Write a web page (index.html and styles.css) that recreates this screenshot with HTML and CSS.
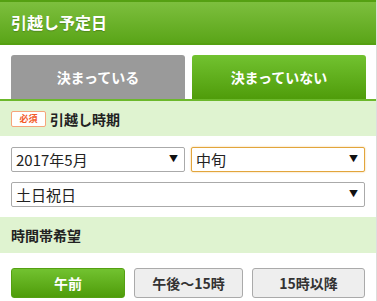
FILE: index.html
```html
<!DOCTYPE html>
<html lang="ja">
<head>
    <meta charset="UTF-8">
    <meta name="viewport" content="width=device-width, initial-scale=1.0">
    <title>引越し予定日</title>
    <link rel="stylesheet" href="styles.css">
</head>
<body>
    <div class="panel">
        <div class="panel-header">引越し予定日</div>

        <div class="tabs">
            <button class="tab tab-off">決まっている</button>
            <button class="tab tab-on">決まっていない</button>
        </div>

        <div class="section-title first">
            <span class="badge">必須</span>
            <span>引越し時期</span>
        </div>

        <div class="fields">
            <div class="row-two">
                <div class="select-box">
                    <select>
                        <option>2017年5月</option>
                    </select>
                    <span class="arrow">▼</span>
                </div>
                <div class="select-box focused">
                    <select>
                        <option>中旬</option>
                    </select>
                    <span class="arrow">▼</span>
                </div>
            </div>
            <div class="select-box">
                <select>
                    <option>土日祝日</option>
                </select>
                <span class="arrow">▼</span>
            </div>
        </div>

        <div class="section-title">
            <span>時間帯希望</span>
        </div>

        <div class="times">
            <button class="time-btn active">午前</button>
            <button class="time-btn">午後〜15時</button>
            <button class="time-btn">15時以降</button>
        </div>
    </div>
</body>
</html>
```

FILE: styles.css
```css
body {
    margin: 0;
    padding: 0;
    font-family: "Noto Sans CJK JP", "Noto Sans", sans-serif;
    background-color: #ffffff;
}

.panel {
    width: 376px;
    height: 301px;
    border-right: 1px solid #dddddd;
    overflow: hidden;
}

.panel-header {
    height: 41px;
    line-height: 41px;
    padding-left: 11px;
    border-top: 2px solid #55a012;
    border-bottom: 2px solid #55a012;
    background: linear-gradient(#7dbf3e, #5aa518);
    color: #ffffff;
    font-size: 16px;
    font-weight: bold;
    text-shadow: 0 1px 1px rgba(0, 0, 0, 0.2);
}

.tabs {
    display: grid;
    grid-template-columns: 1fr 1fr;
    gap: 7px;
    padding: 10px 10px 0 11px;
}

.tab {
    height: 44px;
    border: none;
    border-radius: 3px 3px 0 0;
    font-family: inherit;
    font-size: 14px;
    font-weight: bold;
    color: #ffffff;
    padding: 0;
}

.tab-off {
    background-color: #9a9a9a;
}

.tab-on {
    background: linear-gradient(#72c230, #4f9c0a);
}

.section-title {
    display: flex;
    align-items: center;
    gap: 4px;
    height: 36px;
    padding-left: 11px;
    background-color: #dff3d0;
    font-size: 14px;
    font-weight: bold;
    color: #222222;
}

.section-title.first {
    height: 35px;
    border-top: 2px solid #6cb82b;
}

.badge {
    display: inline-block;
    width: 33px;
    height: 14px;
    line-height: 14px;
    text-align: center;
    border: 1px solid #f6a57a;
    border-radius: 2px;
    background-color: #ffffff;
    color: #f25a2a;
    font-size: 9px;
}

.fields {
    display: flex;
    flex-direction: column;
    gap: 10px;
    padding: 11px 11px 10px 11px;
}

.row-two {
    display: grid;
    grid-template-columns: 1fr 1fr;
    gap: 6px;
}

.select-box {
    position: relative;
}

.select-box select {
    appearance: none;
    -webkit-appearance: none;
    width: 100%;
    height: 25px;
    padding: 0 4px;
    border: 1px solid #aaaaaa;
    border-radius: 2px;
    background-color: #ffffff;
    font-family: inherit;
    font-size: 15px;
    color: #222222;
    outline: none;
}

.select-box.focused select {
    border-color: #e2a53c;
    box-shadow: 0 0 2px #f2c77a;
}

.arrow {
    position: absolute;
    right: 7px;
    top: 7px;
    font-size: 9px;
    line-height: 10px;
    color: #111111;
    pointer-events: none;
}

.times {
    display: grid;
    grid-template-columns: 114px 109px 113px;
    gap: 9px;
    padding: 15px 11px 0 11px;
}

.time-btn {
    height: 30px;
    border: 1px solid #aaaaaa;
    border-radius: 3px;
    background-color: #eeeeee;
    font-family: inherit;
    font-size: 14px;
    font-weight: bold;
    color: #333333;
    padding: 0;
}

.time-btn.active {
    border-color: #55a012;
    background: linear-gradient(#72c230, #4f9c0a);
    color: #ffffff;
}
```
